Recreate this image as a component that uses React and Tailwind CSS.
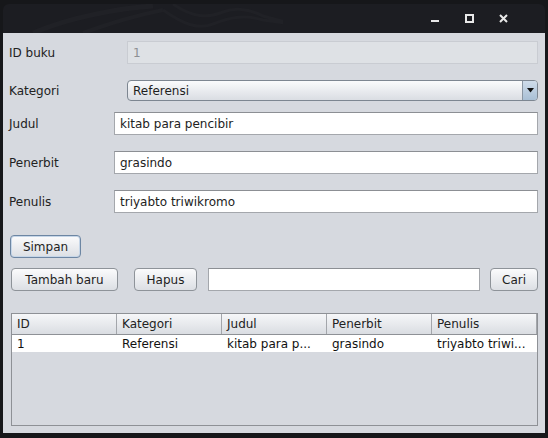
import React from "react";

const font = { fontFamily: "'DejaVu Sans', sans-serif" };

function Field({ value, disabled }) {
  return (
    <div
      className={`flex h-[23px] flex-1 items-center border px-[5px] text-[12px] ${
        disabled
          ? "border-[#c9ccd2] bg-[#dee1e5] text-[#8d8f93]"
          : "border-[#a4a7ac] border-t-[#8c8f94] bg-white text-[#222]"
      }`}
    >
      {value}
    </div>
  );
}

function Btn({ children, focus, className = "" }) {
  return (
    <button
      className={`flex h-[23px] items-center justify-center rounded-[4px] border bg-gradient-to-b from-[#fbfbfc] to-[#dcdfe4] text-[12px] text-[#1e1e1e] ${
        focus
          ? "border-[#6d86a3] shadow-[inset_0_0_0_1px_#c6d6e8]"
          : "border-[#8e9399]"
      } ${className}`}
    >
      {children}
    </button>
  );
}

function Row({ label, children, labelW, className = "" }) {
  return (
    <div className={`flex items-center ${className}`}>
      <div className="text-[12px] text-[#222]" style={{ width: labelW }}>
        {label}
      </div>
      {children}
    </div>
  );
}

export default function App() {
  const cols = ["ID", "Kategori", "Judul", "Penerbit", "Penulis"];
  const row = ["1", "Referensi", "kitab para p...", "grasindo", "triyabto triwi..."];

  return (
    <div className="h-[438px] w-[548px] overflow-hidden bg-[#16171a] pt-[4px]" style={font}>
      <div className="mx-[3px] flex h-[429px] flex-col overflow-hidden rounded-t-[6px]">
        {/* TITLE BAR */}
        <div className="relative flex h-[29px] items-center justify-end gap-[26px] bg-[#1c1d22] pr-[37px]">
          <svg className="absolute left-[20px] top-0" width="260" height="29" viewBox="0 0 260 29" fill="none">
            <path d="M10 29 C50 12 100 4 130 2" stroke="#202126" strokeWidth="5" />
            <path d="M60 29 C90 18 120 10 140 6" stroke="#202126" strokeWidth="4" />
            <path d="M140 6 C160 20 175 26 190 20 C205 14 220 10 240 16 L270 20 L240 12 C225 4 210 4 200 8 C185 14 170 14 150 0" stroke="#202126" strokeWidth="3" />
          </svg>
          <svg width="8" height="10" viewBox="0 0 8 10" className="relative top-[-1px] left-[1px]">
            <rect x="0" y="7" width="8" height="2" fill="#e8e8e8" />
          </svg>
          <svg width="9" height="9" viewBox="0 0 9 9" className="relative left-[1px]">
            <rect x="1" y="1" width="7" height="7" fill="none" stroke="#e8e8e8" strokeWidth="2" />
          </svg>
          <svg width="9" height="9" viewBox="0 0 9 9" className="relative">
            <path d="M1 1 L8 8 M8 1 L1 8" stroke="#e8e8e8" strokeWidth="2" />
          </svg>
        </div>

        {/* CONTENT */}
        <div className="flex flex-1 flex-col bg-[#d6d9df] pl-[6px] pr-[7px]">
          <Row label="ID buku" labelW={118} className="mt-[8px]">
            <Field value="1" disabled />
          </Row>

          <Row label="Kategori" labelW={118} className="mt-[16px]">
            <div className="flex h-[21px] flex-1 items-stretch overflow-hidden rounded-[4px] border border-[#7d8691] bg-gradient-to-b from-[#fafbfc] to-[#dadde3] text-[12px] text-[#1e1e1e]">
              <div className="flex flex-1 items-center pl-[5px]">Referensi</div>
              <div className="flex w-[15px] items-center justify-center border-l border-[#8a96a3] bg-gradient-to-b from-[#cfdcea] to-[#a9bfd5]">
                <svg width="7" height="5" viewBox="0 0 7 5">
                  <path d="M0 0 H7 L3.5 4.5 Z" fill="#111" />
                </svg>
              </div>
            </div>
          </Row>

          <Row label="Judul" labelW={105} className="mt-[11px]">
            <Field value="kitab para pencibir" />
          </Row>

          <Row label="Penerbit" labelW={105} className="mt-[16px]">
            <Field value="grasindo" />
          </Row>

          <Row label="Penulis" labelW={105} className="mt-[16px]">
            <Field value="triyabto triwikromo" />
          </Row>

          <div className="mt-[22px] flex">
            <Btn focus className="ml-[1px] w-[71px]">Simpan</Btn>
          </div>

          <div className="mt-[10px] flex items-center">
            <Btn className="ml-[2px] w-[107px]">Tambah baru</Btn>
            <Btn className="ml-[16px] w-[63px]">Hapus</Btn>
            <div className="ml-[11px] h-[23px] flex-1 border border-[#a4a7ac] border-t-[#8c8f94] bg-white" />
            <Btn className="ml-[10px] w-[48px]">Cari</Btn>
          </div>

          {/* TABLE */}
          <div className="ml-[2px] mt-[22px] flex h-[113px] flex-col border border-[#8e9196] bg-[#d6d9df]">
            <div className="flex h-[21px] border-b border-[#8e9196] bg-gradient-to-b from-[#f6f7f9] to-[#dadde2]">
              {cols.map((c) => (
                <div
                  key={c}
                  className="flex w-[105px] items-center border-r border-[#a3a6ab] pl-[5px] text-[12px] text-[#222]"
                >
                  {c}
                </div>
              ))}
            </div>
            <div className="flex h-[17px] bg-white">
              {row.map((c, i) => (
                <div key={i} className="flex w-[105px] items-center pl-[5px] text-[12px] text-[#111]">
                  {c}
                </div>
              ))}
            </div>
          </div>
        </div>
      </div>
    </div>
  );
}
